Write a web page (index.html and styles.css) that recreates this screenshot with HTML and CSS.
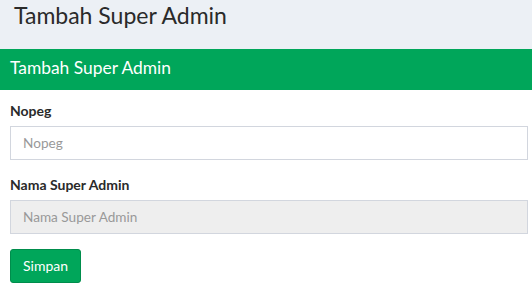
FILE: index.html
```html
<!DOCTYPE html>
<html lang="en">
<head>
    <meta charset="UTF-8">
    <meta name="viewport" content="width=device-width, initial-scale=1.0">
    <title>Tambah Super Admin</title>
    <link rel="stylesheet" href="styles.css">
</head>
<body>
    <section class="content-header">
        <h1>Tambah Super Admin</h1>
    </section>

    <div class="box">
        <div class="box-header">
            <h3 class="box-title">Tambah Super Admin</h3>
        </div>
        <form class="box-body">
            <div class="form-group">
                <label for="nopeg">Nopeg</label>
                <input type="text" id="nopeg" class="form-control" placeholder="Nopeg">
            </div>
            <div class="form-group">
                <label for="nama">Nama Super Admin</label>
                <input type="text" id="nama" class="form-control" placeholder="Nama Super Admin" readonly>
            </div>
            <button type="button" class="btn btn-success">Simpan</button>
        </form>
    </div>
</body>
</html>
```

FILE: styles.css
```css
body {
    font-family: Lato, 'Liberation Sans', sans-serif;
    background-color: #ecf0f5;
    color: #333;
    margin: 0;
    padding: 0;
}

.content-header {
    height: 49px;
    box-sizing: border-box;
    padding: 2px 14px 0;
}

.content-header h1 {
    margin: 0;
    font-size: 23px;
    font-weight: 400;
    line-height: 1.2;
    color: #2a2a2a;
}

.box {
    background-color: #fff;
    margin-right: -6px;
}

.box-header {
    background-color: #00a65a;
    color: #fff;
    padding: 8px 10px;
    height: 41px;
    box-sizing: border-box;
}

.box-title {
    margin: 0;
    font-size: 17.4px;
    font-weight: 400;
    line-height: 21px;
}

.box-body {
    padding: 11px 10px 10px;
}

.form-group {
    margin-bottom: 15px;
}

label {
    display: block;
    font-size: 14px;
    font-weight: 700;
    line-height: 20px;
    margin-bottom: 5px;
    color: #2a2a2a;
}

.form-control {
    display: block;
    width: 100%;
    height: 34px;
    box-sizing: border-box;
    padding: 6px 12px;
    font-family: inherit;
    font-size: 13.6px;
    color: #555;
    background-color: #fff;
    border: 1px solid #d2d6de;
    border-radius: 0;
    outline: none;
}

.form-control::placeholder {
    color: #999;
}

.form-control[readonly] {
    background-color: #eee;
}

.btn {
    height: 34px;
    padding: 6px 12px;
    font-family: inherit;
    font-size: 14px;
    line-height: 20px;
    border-radius: 3px;
    border: 1px solid transparent;
    cursor: pointer;
}

.btn-success {
    background-color: #00a65a;
    border-color: #008d4c;
    color: #fff;
}
```
